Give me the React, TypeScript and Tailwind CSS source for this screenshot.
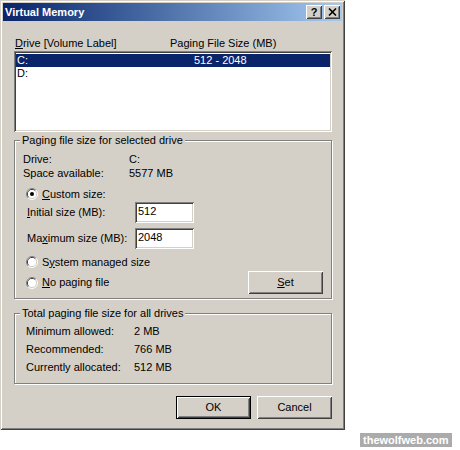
const raised =
  "shadow-[inset_1px_1px_#ffffff,inset_-1px_-1px_#404040,inset_2px_2px_#d4d0c8,inset_-2px_-2px_#808080]";
const sunken =
  "shadow-[inset_1px_1px_#808080,inset_-1px_-1px_#ffffff,inset_2px_2px_#404040,inset_-2px_-2px_#d4d0c8]";
const etched = "border border-[#808080] shadow-[inset_1px_1px_#ffffff,1px_1px_#ffffff]";

const Radio = ({ checked = false }: { checked?: boolean }) => (
  <svg width="12" height="12" viewBox="0 0 12 12" className="shrink-0">
    <path d="M2.11 9.89A5.5 5.5 0 0 1 9.89 2.11" stroke="#808080" fill="none" />
    <path d="M9.89 2.11A5.5 5.5 0 0 1 2.11 9.89" stroke="#ffffff" fill="none" />
    <path d="M2.82 9.18A4.5 4.5 0 0 1 9.18 2.82" stroke="#404040" fill="none" />
    <path d="M9.18 2.82A4.5 4.5 0 0 1 2.82 9.18" stroke="#d4d0c8" fill="none" />
    <circle cx="6" cy="6" r="4" fill="#ffffff" />
    {checked && <circle cx="6" cy="6" r="2" fill="#000000" />}
  </svg>
);

const Legend = ({ children }: { children: React.ReactNode }) => (
  <span className="-mt-[7px] ml-[5px] block h-[13px] w-fit bg-[#d4d0c8] px-[2px]">{children}</span>
);

const totals = [
  ["Minimum allowed:", "2 MB"],
  ["Recommended:", "766 MB"],
  ["Currently allocated:", "512 MB"],
];

export default function App() {
  return (
    <div className="flex h-[450px] w-[460px] bg-white font-['Liberation_Sans',Arial,sans-serif] text-[11px] leading-[13px] text-black">
      <div
        className={`flex h-[430px] w-[345px] shrink-0 flex-col bg-[#d4d0c8] p-[3px] shadow-[inset_1px_1px_#d4d0c8,inset_-1px_-1px_#404040,inset_2px_2px_#ffffff,inset_-2px_-2px_#808080]`}
      >
        {/* caption */}
        <div className="flex h-[18px] items-center bg-linear-to-r from-[#0a246a] to-[#a6caf0] pl-[2px] pr-[2px]">
          <span className="flex-1 font-bold text-white">Virtual Memory</span>
          <div className="flex gap-[2px]">
            <div className={`flex h-[14px] w-[16px] items-center justify-center bg-[#d4d0c8] font-bold ${raised}`}>?</div>
            <div className={`flex h-[14px] w-[16px] items-center justify-center bg-[#d4d0c8] ${raised}`}>
              <svg width="9" height="8" viewBox="0 0 9 8">
                <path d="M1 0.5L8 7.5M8 0.5L1 7.5" stroke="#000" strokeWidth="1.6" />
              </svg>
            </div>
          </div>
        </div>

        <div className="ml-[11px] mr-[10px] flex flex-col">
          <div className="mt-[16px] flex h-[13px] pl-[1px]">
            <span className="w-[155px]">
              <span className="underline">D</span>rive [Volume Label]
            </span>
            <span>Paging File Size (MB)</span>
          </div>

          <div className={`mt-[1px] h-[81px] bg-white px-[2px] pt-[3px] ${sunken}`}>
            <div className="flex h-[13px] bg-[#0a246a] text-white">
              <span className="w-[178px] pl-[1px]">C:</span>
              <span>512 - 2048</span>
            </div>
            <div className="flex h-[13px]">
              <span className="w-[178px] pl-[1px]">D:</span>
            </div>
          </div>

          {/* selected drive */}
          <div className={`mt-[8px] flex flex-col px-[8px] pb-[4px] ${etched}`}>
            <div className="-mx-[8px]">
              <Legend>Paging file size for selected drive</Legend>
            </div>
            <div className="mt-[5px] flex h-[14px] items-center">
              <span className="w-[106px]">Drive:</span>
              <span>C:</span>
            </div>
            <div className="flex h-[14px] items-center">
              <span className="w-[106px]">Space available:</span>
              <span>5577 MB</span>
            </div>
            <div className="mt-[7px] ml-[3px] flex h-[14px] items-center gap-[4px]">
              <Radio checked />
              <span>
                <span className="underline">C</span>ustom size:
              </span>
            </div>
            <div className="mt-[1px] ml-[4px] flex h-[21px] items-center">
              <span className="w-[108px]">
                <span className="underline">I</span>nitial size (MB):
              </span>
              <div className={`h-[21px] w-[59px] bg-white pl-[3px] pt-[3px] ${sunken}`}>512</div>
            </div>
            <div className="mt-[5px] ml-[4px] flex h-[21px] items-center">
              <span className="w-[108px]">
                Ma<span className="underline">x</span>imum size (MB):
              </span>
              <div className={`h-[21px] w-[59px] bg-white pl-[3px] pt-[3px] ${sunken}`}>2048</div>
            </div>
            <div className="mt-[6px] ml-[3px] flex h-[14px] items-center gap-[4px]">
              <Radio />
              <span>
                S<span className="underline">y</span>stem managed size
              </span>
            </div>
            <div className="mt-[2px] flex h-[23px] items-center justify-between">
              <div className="ml-[3px] flex items-center gap-[4px]">
                <Radio />
                <span>
                  <span className="underline">N</span>o paging file
                </span>
              </div>
              <div className={`flex h-[23px] w-[75px] items-center justify-center ${raised}`}>
                <span>
                  <span className="underline">S</span>et
                </span>
              </div>
            </div>
          </div>

          {/* totals */}
          <div className={`mt-[14px] flex flex-col pl-[11px] pb-[9px] ${etched}`}>
            <div className="-ml-[11px]">
              <Legend>Total paging file size for all drives</Legend>
            </div>
            <div className="mt-[5px] flex flex-col gap-[5px]">
              {totals.map(([label, value]) => (
                <div key={label} className="flex h-[13px]">
                  <span className="w-[108px]">{label}</span>
                  <span>{value}</span>
                </div>
              ))}
            </div>
          </div>

          <div className="mt-[12px] flex justify-end gap-[6px]">
            <div className="h-[23px] w-[75px] border border-black">
              <div className={`flex h-full w-full items-center justify-center ${raised}`}>OK</div>
            </div>
            <div className={`flex h-[23px] w-[75px] items-center justify-center ${raised}`}>Cancel</div>
          </div>
        </div>
      </div>

      <div className="mb-[3px] ml-[15px] self-end bg-[#ababab] px-[3px] font-bold leading-[14px] text-white">
        thewolfweb.com
      </div>
    </div>
  );
}
